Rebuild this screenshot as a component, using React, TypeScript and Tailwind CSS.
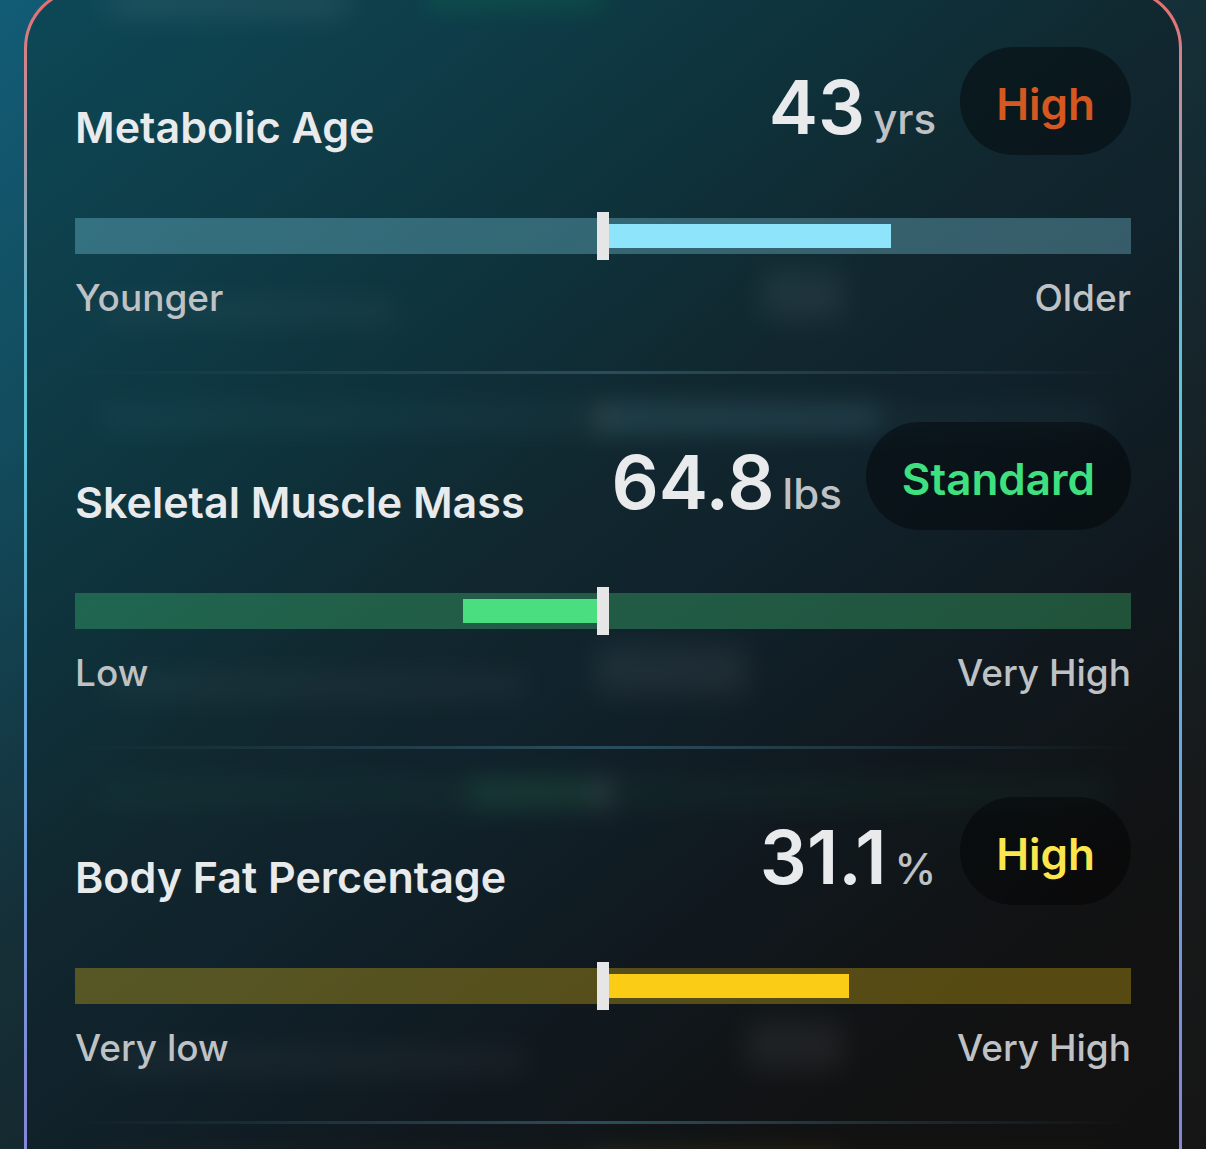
import type { FC } from 'react';
import clsx from 'clsx';

type Tone = 'sky' | 'green' | 'yellow';

interface Metric {
  title: string;
  value: string;
  unit: string;
  status: string;
  statusColor: string;
  tone: Tone;
  // offset from the middle of the bar, in percent of its width
  offset: number;
  minLabel: string;
  maxLabel: string;
  titleGlow: string;
  valueGlow: string;
}

const metrics: Metric[] = [
  {
    title: 'Metabolic Age',
    value: '43',
    unit: 'yrs',
    status: 'High',
    statusColor: 'text-[#d4581f]',
    tone: 'sky',
    offset: 27.3,
    minLabel: 'Younger',
    maxLabel: 'Older',
    titleGlow: 'w-72',
    valueGlow: 'right-72 w-20',
  },
  {
    title: 'Skeletal Muscle Mass',
    value: '64.8',
    unit: 'lbs',
    status: 'Standard',
    statusColor: 'text-[#3fe07f]',
    tone: 'green',
    offset: -13.3,
    minLabel: 'Low',
    maxLabel: 'Very High',
    titleGlow: 'w-[420px]',
    valueGlow: 'right-96 w-38',
  },
  {
    title: 'Body Fat Percentage',
    value: '31.1',
    unit: '%',
    status: 'High',
    statusColor: 'text-[#fbe64d]',
    tone: 'yellow',
    offset: 23.3,
    minLabel: 'Very low',
    maxLabel: 'Very High',
    titleGlow: 'w-[420px]',
    valueGlow: 'right-72 w-24',
  },
];

const trackColors: Record<Tone, string> = {
  sky: 'bg-[#8de4fb]/30',
  green: 'bg-[#4ade80]/30',
  yellow: 'bg-[#facc15]/30',
};

const fillColors: Record<Tone, string> = {
  sky: 'bg-[#8de4fb]',
  green: 'bg-[#4ade80]',
  yellow: 'bg-[#facc15]',
};

const getFillRange = (offset: number) => ({
  left: `${offset < 0 ? 50 + offset : 50}%`,
  width: `${Math.abs(offset)}%`,
});

const RangeBar: FC<Pick<Metric, 'title' | 'tone' | 'offset'>> = ({
  title,
  tone,
  offset,
}) => (
  <div
    role="meter"
    aria-label={title}
    aria-valuemin={-50}
    aria-valuemax={50}
    aria-valuenow={offset}
    className={clsx('relative h-9', trackColors[tone])}
  >
    <div
      className={clsx('absolute inset-y-[6px]', fillColors[tone])}
      style={getFillRange(offset)}
    />
    <div className="absolute -inset-y-[6px] left-1/2 w-3 -translate-x-1/2 bg-[#e6e6e6]" />
  </div>
);

// Reflection of a bar, seen through the frosted card
const BarGlow: FC<Pick<Metric, 'tone' | 'offset'>> = ({ tone, offset }) => (
  <div
    aria-hidden="true"
    className={clsx(
      'absolute inset-x-6 top-7 h-8 opacity-12 blur-[12px]',
      trackColors[tone]
    )}
  >
    <div
      className={clsx('absolute inset-y-0', fillColors[tone])}
      style={getFillRange(offset)}
    />
    <div className="absolute inset-y-0 left-1/2 w-4 -translate-x-1/2 bg-white" />
  </div>
);

const MetricRow: FC<Metric & { previous?: Metric }> = ({
  title,
  value,
  unit,
  status,
  statusColor,
  tone,
  offset,
  minLabel,
  maxLabel,
  titleGlow,
  valueGlow,
  previous,
}) => (
  <li className="relative">
    {previous && <BarGlow tone={previous.tone} offset={previous.offset} />}
    <div
      aria-hidden="true"
      className={clsx(
        'absolute top-[300px] left-8 h-6 bg-white opacity-4 blur-[14px]',
        titleGlow
      )}
    />
    <div
      aria-hidden="true"
      className={clsx(
        'absolute top-[272px] h-12 bg-white opacity-6 blur-[14px]',
        valueGlow
      )}
    />

    <div className="relative pt-12 pb-[49px]">
      <div className="flex items-end justify-between">
        <h2 className="text-[43px] leading-14 font-semibold">{title}</h2>
        <div className="flex items-end gap-6">
          <p className="flex items-baseline gap-2 leading-[72px]">
            <span className="text-[74px] font-semibold">{value}</span>
            <span className="text-[42px] font-medium text-[#bfc2c5]">
              {unit}
            </span>
          </p>
          <span
            className={clsx(
              'rounded-full bg-black/40 px-9 pt-[27px] pb-[21px] text-[44px] leading-[60px] font-semibold',
              statusColor
            )}
          >
            {status}
          </span>
        </div>
      </div>

      <div className="mt-[63px]">
        <RangeBar title={title} tone={tone} offset={offset} />
      </div>

      <div className="mt-5 flex justify-between text-[37px] leading-12 font-medium text-[#bfc2c5]">
        <span>{minLabel}</span>
        <span>{maxLabel}</span>
      </div>
    </div>

    <div className="h-[3px] bg-linear-to-r from-transparent via-[#2b4d5b] to-transparent" />
  </li>
);

export default function App() {
  const last = metrics[metrics.length - 1];

  return (
    <main className="h-screen overflow-hidden bg-[linear-gradient(142deg,#125c76_0%,#124b5c_22%,#153039_44%,#16262c_60%,#171a1b_82%,#161616_100%)] px-6 font-['Inter',sans-serif] text-[#e8eaec]">
      <div className="-mt-3 rounded-[60px] bg-[linear-gradient(180deg,#ef6a6a_0px,#c98a93_90px,#8fa3b4_210px,#62bdd4_330px,#5fc4da_440px,#69a6e0_780px,#8289d8_1100px,#8486d6_100%)] p-[3px]">
        <div className="relative rounded-[57px] bg-[linear-gradient(142deg,#0d4857_0%,#0e3f4b_14%,#0e333c_30%,#11272f_43%,#10212a_54%,#10191f_66%,#111213_80%,#111111_100%)] px-12 pt-2 pb-32">
          <div
            aria-hidden="true"
            className="absolute top-0 left-20 h-6 w-60 bg-white opacity-8 blur-[14px]"
          />
          <div
            aria-hidden="true"
            className="absolute top-0 left-[400px] h-4 w-44 bg-green-400 opacity-15 blur-[12px]"
          />
          <ul>
            {metrics.map((metric, i) => (
              <MetricRow
                key={metric.title}
                {...metric}
                previous={metrics[i - 1]}
              />
            ))}
          </ul>
          <div className="relative">
            <BarGlow tone={last.tone} offset={last.offset} />
          </div>
        </div>
      </div>
    </main>
  );
}
